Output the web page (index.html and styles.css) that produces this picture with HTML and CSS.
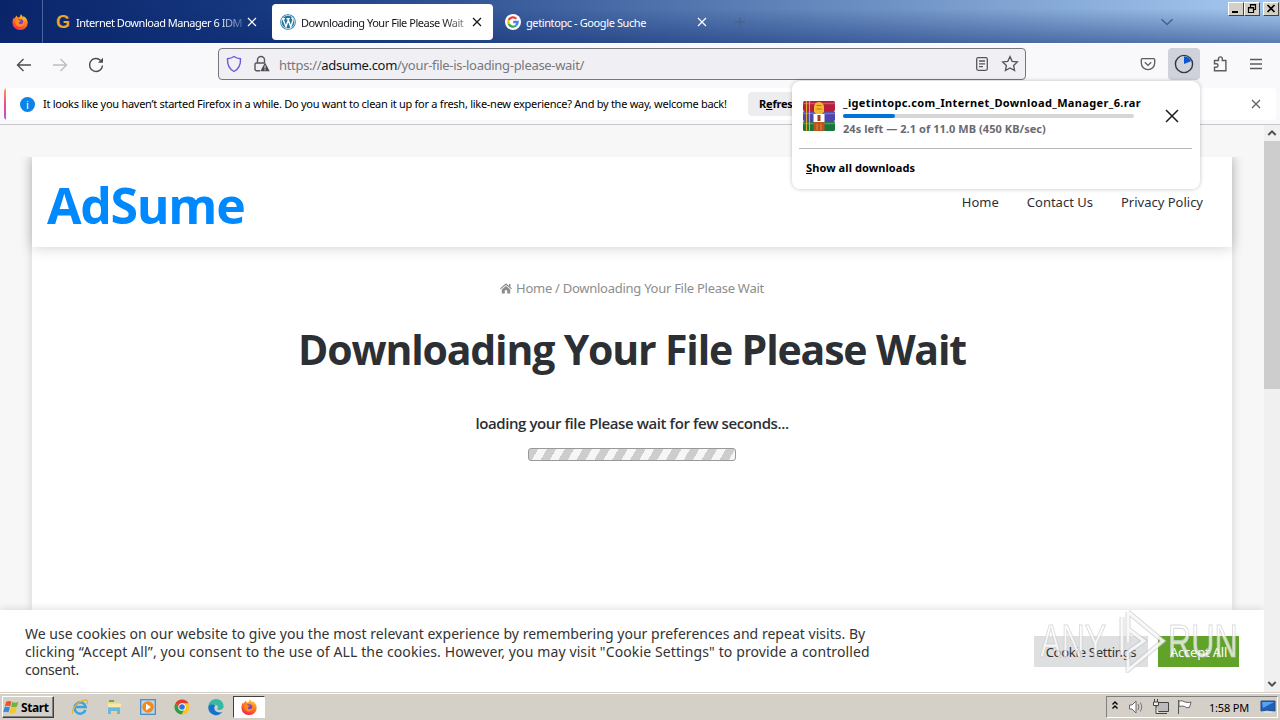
FILE: index.html
```html
<!DOCTYPE html>
<html lang="en">
<head>
<meta charset="utf-8">
<title>Downloading Your File Please Wait</title>
<link rel="stylesheet" href="styles.css">
</head>
<body>
<svg width="0" height="0" class="defs">
  <defs>
    <linearGradient id="fox" x1="0.8" y1="0" x2="0.3" y2="1"><stop offset="0" stop-color="#ffe02e"/><stop offset=".45" stop-color="#ff7a22"/><stop offset="1" stop-color="#f0274f"/></linearGradient>
    <symbol id="firefox" viewBox="0 0 16 16">
      <path d="M8.5 0.3c1.6 1 2.2 2.2 2.4 3.2.5-.3.6-1 .5-1.6 2.4 1.4 4.3 3.7 4.3 6.8a7.6 7.3 0 0 1-15.3 0c0-2.300.8-4.200 1.600-5.200.1.6.3.9.6 1.100C3.300 3 4.500 2 5 1.600c0 1 .3 1.600 1.200 2C7.800 3.600 8.700 2 8.500.3z" fill="url(#fox)"/>
      <circle cx="8" cy="8.600" r="3.400" fill="#7a3fd0"/>
      <path d="M3.600 5.500c1.500-.6 3 .1 3.600 1.100h1.700c-.4 1.100-1.500 1.200-2 1.800-.2 1.300 1.200 2.200 2.600 1.700 1.800-.5 2.300-2.300 1.300-4 2.600 2.300 1.300 6.400-2.600 6.600-4 .2-6.200-3.700-4.600-7.200z" fill="#ff8a1e"/>
    </symbol>
    <symbol id="google" viewBox="0 0 16 16">
      <circle cx="8" cy="8" r="8" fill="#fff"/>
      <g fill="none" stroke-width="2.300">
        <path d="M11.300 4.700A4.700 4.700 0 0 0 3.800 6" stroke="#ea4335"/>
        <path d="M3.800 6a4.700 4.700 0 0 0 0 4" stroke="#fbbc05"/>
        <path d="M3.800 10a4.700 4.700 0 0 0 7.300 1.500" stroke="#34a853"/>
        <path d="M8.200 8h4.400c0 1.500-.5 2.600-1.500 3.500" stroke="#4285f4"/>
      </g>
    </symbol>
    <symbol id="x" viewBox="0 0 12 12"><path d="M2 2l8 8M10 2l-8 8" fill="none" stroke="currentColor" stroke-width="1.200"/></symbol>
  </defs>
</svg>

<header class="tabs">
  <div class="pinned"><svg width="16" height="16"><use href="#firefox"/></svg></div>
  <div class="tab first">
    <b class="g-icon">G</b>
    <span class="tab-title t1">Internet Download Manager 6 IDM</span>
    <svg class="close" width="12" height="12"><use href="#x"/></svg>
  </div>
  <div class="tab active">
    <svg class="wp" width="16" height="16" viewBox="0 0 16 16"><circle cx="8" cy="8" r="7.800" fill="#21759b"/><circle cx="8" cy="8" r="6.700" fill="none" stroke="#fff" stroke-width=".7"/><path d="M2.700 4.500l3.300 8.300L8.300 6 10.700 12.800 12.900 6.400C13.400 5 12 4.600 11.700 3.300M1.900 4.800h3M6.500 4.800h3.200" fill="none" stroke="#fff" stroke-width="1.400"/></svg>
    <span class="tab-title t2">Downloading Your File Please Wait</span>
    <svg class="close" width="12" height="12"><use href="#x"/></svg>
  </div>
  <div class="tab third">
    <svg width="16" height="16"><use href="#google"/></svg>
    <span class="tab-title t3">getintopc - Google Suche</span>
    <svg class="close" width="12" height="12"><use href="#x"/></svg>
  </div>
  <svg class="plus" width="12" height="12" viewBox="0 0 12 12"><path d="M6 1v10M1 6h10" stroke="#48638f" stroke-width="1.300"/></svg>
  <svg class="chev" width="14" height="8" viewBox="0 0 14 8"><path d="M1.500 1.200L7 6.500l5.500-5.300" fill="none" stroke="#45638f" stroke-width="1.500"/></svg>
  <div class="winbtns">
    <i><svg width="14" height="12"><path d="M3 9h6" stroke="#000" stroke-width="2"/></svg></i>
    <i><svg width="14" height="12"><path d="M5.500 4V1.500h5v5H9M3.500 4.500h5v5h-5zM5 2h6M3 5h6" fill="none" stroke="#000" stroke-width="1.200"/></svg></i>
    <i class="last"><svg width="14" height="12"><path d="M3.500 2l7 7M10.500 2l-7 7" stroke="#000" stroke-width="1.700"/></svg></i>
  </div>
</header>

<nav class="toolbar">
  <svg class="nav-icons" width="100" height="20" viewBox="0 0 100 20" fill="none" stroke-width="1.400">
    <path d="M15 10H1.500M7.500 4L1.500 10l6 6" stroke="#4b4b52"/>
    <path d="M37 10h13.500M44.500 4l6 6-6 6" stroke="#bcbcc2"/>
    <path d="M86.500 10.500a6.500 6.500 0 1 1-1.900-5.100" stroke="#4b4b52"/><path d="M87 2.800v5h-5z" fill="#4b4b52"/>
  </svg>
  <div class="urlbar">
    <svg width="16" height="18" viewBox="0 0 16 18"><path d="M8 1.500c2 1.500 4 2 6.500 2.200C14.800 9 13.500 13.500 8 16.500 2.500 13.500 1.200 9 1.500 3.700 4 3.500 6 3 8 1.500z" fill="none" stroke="#6a5bd6" stroke-width="1.400"/></svg>
    <svg class="lock" width="18" height="18" viewBox="0 0 18 18"><path d="M4.500 8V5a3.500 3.500 0 0 1 7 0v3M7 15.800H3.500a1.500 1.500 0 0 1-1.500-1.500V9.500A1.500 1.500 0 0 1 3.500 8h8" fill="none" stroke="#55555c" stroke-width="1.400"/><path d="M12 7.500l4.700 8.800H7.300z" fill="#4b4b52"/><path d="M12 10.500v3M12 14.200v1.200" stroke="#f0f0f4"/></svg>
    <span class="url">https://<b>adsume.com</b>/your-file-is-loading-please-wait/</span>
    <svg class="url-end" width="46" height="18" viewBox="0 0 46 18" fill="none" stroke="#55555c" stroke-width="1.300"><rect x="2.700" y="2.700" width="10.600" height="12.600" rx="1.500"/><path d="M5 6h6M5 8.800h6M5 11.600h4"/><path d="M36 1.600l2.200 4.700 5.200.6-3.800 3.500 1 5.200L36 13l-4.600 2.600 1-5.200-3.800-3.500 5.200-.6z"/></svg>
  </div>
  <div class="tools">
    <svg width="16" height="16" viewBox="0 0 16 16" fill="none" stroke="#5b5b62" stroke-width="1.300"><path d="M2.500 2.700h11a1.200 1.200 0 0 1 1.200 1.200V7a6.700 6.700 0 0 1-13.400 0V3.900a1.200 1.200 0 0 1 1.200-1.200z"/><path d="M4.800 6.300L8 9.400l3.200-3.100"/></svg>
    <div class="dl"><svg width="20" height="20" viewBox="0 0 20 20"><circle cx="10" cy="10" r="8.600" fill="none" stroke="#30394a" stroke-width="1.400"/><path d="M10 10V2.500A7.500 7.500 0 0 1 17 7.300z" fill="#0a58d0"/></svg></div>
    <svg class="puzzle" width="18" height="18" viewBox="0 0 18 18" fill="none" stroke="#5b5b62" stroke-width="1.400"><path d="M2.500 15.800v-3.500h1.800a1.700 1.700 0 0 0 0-3.500H2.500V5.500h4V3.800a1.900 1.900 0 0 1 3.800 0v1.700h3.600v10.300z"/></svg>
    <svg width="14" height="14" viewBox="0 0 14 14" stroke="#5b5b62" stroke-width="1.300"><path d="M1 2.500h12M1 7h12M1 11.500h12"/></svg>
  </div>
</nav>

<div class="notice">
  <div class="notice-box">
    <span class="info">i</span>
    <span class="notice-text">It looks like you haven’t started Firefox in a while. Do you want to clean it up for a fresh, like-new experience? And by the way, welcome back!</span>
    <span class="refresh">R<u>e</u>fresh Firefox…</span>
    <svg class="notice-x" width="12" height="12"><use href="#x"/></svg>
  </div>
</div>

<div class="viewport">
  <main class="page">
    <div class="site">
      <div class="site-head">
        <span class="logo">AdSume</span>
        <div class="menu"><span>Home</span><span>Contact Us</span><span>Privacy Policy</span></div>
      </div>
      <div class="crumbs"><svg width="12" height="11" viewBox="0 0 12 11" fill="#8d8d8d"><path d="M6 .3L12 5.500l-.7.8L6 1.900.7 6.300 0 5.500zM9 1h1.500v3L9 2.800zM6 2.900l4.200 3.500V10.500H7.200V7.300H4.800v3.200H1.800V6.400z"/></svg><span>Home / Downloading Your File Please Wait</span></div>
      <h1>Downloading Your File Please Wait</h1>
      <p class="wait">loading your file Please wait for few seconds...</p>
      <div class="stripes"></div>
    </div>
    <div class="cookies">
      <div class="cookie-text"><div class="c1">We use cookies on our website to give you the most relevant experience by remembering your preferences and repeat visits. By</div><div class="c2">clicking “Accept All”, you consent to the use of ALL the cookies. However, you may visit "Cookie Settings" to provide a controlled</div><div class="c3">consent.</div></div>
      <span class="btn grey">Cookie Settings</span>
      <span class="btn green">Accept All</span>
    </div>
  </main>
  <div class="scroll">
    <svg width="16" height="16" viewBox="0 0 16 16"><path d="M4.300 10L8 6.300l3.700 3.700" fill="none" stroke="#505050" stroke-width="2"/></svg>
    <div class="thumb"></div>
    <svg class="down" width="16" height="16" viewBox="0 0 16 16"><path d="M4.300 6L8 9.700 11.700 6" fill="none" stroke="#505050" stroke-width="2"/></svg>
  </div>
</div>

<footer class="taskbar">
  <div class="start"><svg width="17" height="16" viewBox="0 0 16 15"><path d="M3 2.500c1.800-1 3.300-1 5 0L6.800 7C5.200 6.200 3.500 6.200 1.700 7z" fill="#e8562a"/><path d="M8.800 2.800c1.800 1 3.700 1 5.700-.2L13.200 7c-1.900 1.100-3.800 1.100-5.600.2z" fill="#6fb43f"/><path d="M1.500 7.800c1.800-.8 3.400-.8 5 0l-1.300 4.700c-1.600-.8-3.300-.8-5 0z" fill="#3b86d8"/><path d="M7.300 8.100c1.800.9 3.700.9 5.600-.1l-1.300 4.500c-1.900 1.200-3.800 1.200-5.600.2z" fill="#f6c528"/></svg><b>Start</b></div>
  <div class="quick">
    <svg width="18" height="18" viewBox="0 0 18 18"><path d="M14.500 11.800A5.600 5.600 0 1 1 14.700 9H5" fill="none" stroke="#3aa3e3" stroke-width="2.500"/><path d="M2 15.500C-.5 13 6 3.500 14 2c3-.5 3 2 1.800 4" fill="none" stroke="#e6b32c" stroke-width="1.300"/></svg>
    <svg width="18" height="18" viewBox="0 0 18 18"><path d="M2 3h5l1 1.500h7V15H2z" fill="#efd27b"/><path d="M3 5.500h13V9H3z" fill="#f8e9a8"/><path d="M4 2h5v2H4z" fill="#57ae6d"/><path d="M3 16V9.500h12V16h-3v-3H6v3z" fill="#67b9e4"/></svg>
    <svg width="18" height="18" viewBox="0 0 18 18"><rect x="1.700" y="1.700" width="14.600" height="14.600" fill="#b9d8ef" stroke="#4686bd" stroke-width="1.200"/><circle cx="9" cy="9" r="5.800" fill="#f18a1c"/><path d="M7 5.500l5 3.500-5 3.500z" fill="#fff"/></svg>
    <svg width="18" height="18" viewBox="0 0 18 18"><circle cx="9" cy="9" r="7.500" fill="#f7c62c"/><path d="M2.500 5.300A7.500 7.500 0 0 1 15.500 5.300H9L6 10.800z" fill="#e23c2e"/><path d="M2.500 5.200a7.500 7.500 0 0 0 6 11.300l3.500-6-6 .3z" fill="#2d9f4c"/><circle cx="9" cy="9" r="3.700" fill="#fff"/><circle cx="9" cy="9" r="2.800" fill="#2f73dc"/></svg>
    <svg width="18" height="18" viewBox="0 0 18 18"><path d="M1.300 9a7.700 7.700 0 0 1 15.400-.8c0 3.500-4.500 4.500-6.600 3 2.300-2.500-.5-5-3.300-4.300C4 7.500 2.300 9 1.300 9z" fill="#35b9a2"/><path d="M1.300 9a7.700 7.700 0 0 0 14 4.800c-2.800 1.200-7.300.7-8-3.200-.2-1.500.5-2.500 1.200-3.100C5 5.500 1.700 7 1.300 9z" fill="#1772cb"/></svg>
    <div class="task-active"><svg width="16" height="16"><use href="#firefox"/></svg></div>
  </div>
  <div class="tray">
    <svg width="86" height="18" viewBox="0 0 86 18" fill="none"><path d="M5.500 6.500l2.500-2.500 2.500 2.500M5.500 10.500L8 8l2.500 2.500" stroke="#000" stroke-width="1.400"/>
      <path d="M22.500 7h2.500l4-4v12l-4-4h-2.500z" fill="#fff" stroke="#666"/><path d="M31 6q1.700 3 0 6M33.500 4.500q2.700 4.500 0 9" stroke="#777"/>
      <path d="M49.500 4.500h12v9h-12z" fill="#bbb" stroke="#444"/><path d="M52 15.500h8" stroke="#444"/><path d="M47.500 1v3M50.500 1v3M46.500 4h5v3.500h-5zM49 7.500v8h3" stroke="#444" fill="#eee"/>
      <path d="M71.500 2v14" stroke="#555"/><path d="M72 3q3-1 6 1 3 1 6 0l-1.500 5.500q-3 1-5-1-2.500-1-5.500 0z" fill="#fff" stroke="#666"/></svg>
    <span class="clock">1:58 PM</span>
    <svg width="16" height="14" viewBox="0 0 16 14"><path d="M1 1h14v10l-8-1-6 1z" fill="#1c61bd" stroke="#254b84"/><path d="M2 2h12L3 8z" fill="#5ba4ec"/><path d="M4 12h8v1H4z" fill="#ddd"/></svg>
  </div>
</footer>

<aside class="downloads">
  <div class="item">
    <svg width="32" height="32" viewBox="0 0 32 32"><rect y="1" width="32" height="10" rx="1.500" fill="#b51f3c"/><rect y="11" width="32" height="10" rx="1.500" fill="#4c46ad"/><rect y="21" width="32" height="10" rx="1.500" fill="#19763a"/><path d="M0 3.500h32M0 13.500h32M0 23.500h32" stroke="#fff" stroke-opacity=".25" stroke-width="1.500"/><path d="M3.500 1v30M6.500 1v30" stroke="#e5a92e" stroke-width="1.100"/><rect x="10.500" y="21" width="11" height="10" fill="#ba5520"/><path d="M11 12V7a5 5 0 0 1 10 0v5l-5 4z" fill="#f4b72e"/><path d="M13.500 9h5M13.500 5.500h5" stroke="#b5741c" stroke-width="1.200"/><rect x="10.500" y="14" width="11" height="8" fill="#fff"/><rect x="14.500" y="15" width="3" height="6" fill="#a34020"/><path d="M14 24v6M18 24v6" stroke="#e78a35"/></svg>
    <div class="info-col">
      <b class="fname">_igetintopc.com_Internet_Download_Manager_6.rar</b>
      <div class="bar"><div class="fill"></div></div>
      <b class="status">24s left — 2.1 of 11.0 MB (450 KB/sec)</b>
    </div>
    <svg class="cancel" width="16" height="16" viewBox="0 0 16 16"><path d="M2 2l12 12M14 2L2 14" stroke="#1b1b20" stroke-width="1.500"/></svg>
  </div>
  <b class="all"><u>S</u>how all downloads</b>
</aside>

<div class="mark"><span>ANY</span><svg width="50" height="64" viewBox="0 0 50 64"><path d="M4 8v38M10 3v30M10 3l35 29-35 29V43l16-11L10 20" fill="none" stroke="#bbb" stroke-opacity=".55" stroke-width="5"/><path d="M4 8v38M10 3v30M10 3l35 29-35 29V43l16-11L10 20" fill="none" stroke="#fff" stroke-opacity=".8" stroke-width="3"/></svg><span>RUN</span></div>
</body>
</html>
```
FILE: styles.css
```css
* { box-sizing: border-box; }
body { margin: 0; width: 1280px; height: 720px; overflow: hidden; display: flex; flex-direction: column; position: relative; font-family: "Noto Sans", sans-serif; font-size: 11px; color: #000; }
svg { display: block; flex: none; }
.defs { position: absolute; }
span, b { white-space: nowrap; }

.tabs { height: 43px; flex: none; display: flex; align-items: center; color: #fff; background: linear-gradient(180deg, rgba(20,50,120,0) 20%, rgba(10,40,110,.48)), linear-gradient(90deg, #0a246a, #16387f 20%, #a6caf0 100%); }
.pinned { width: 43px; height: 43px; padding: 0 0 0 12px; display: flex; align-items: center; border-right: 1px solid #4c64a0; }
.tab { display: flex; align-items: center; height: 36px; border-radius: 4px; }
.tab-title { margin-left: 6px; padding-top: 2px; line-height: 16px; flex: none; }
.first { width: 229px; padding-left: 13px; }
.g-icon { width: 15px; font: bold 18px/18px "Liberation Sans", sans-serif; color: #e8a62c; }
.t1 { width: 166px; letter-spacing: -.47px; margin-left: 5px; -webkit-mask-image: linear-gradient(90deg, #000 140px, transparent 175px); }
.first .close { margin-left: 4px; }
.active { width: 221px; background: #fff; color: #15141a; padding-left: 8px; }
.t2 { width: 164px; margin-left: 5px; letter-spacing: -.47px; -webkit-mask-image: linear-gradient(90deg, #000 140px, transparent 185px); }
.active .close { margin-left: 6px; }
.third { width: 229px; padding-left: 12px; }
.t3 { width: 168px; margin-left: 5px; letter-spacing: -.4px; }
.third .close { margin-left: 2px; }
.plus { margin-left: 12px; }
.chev { margin-left: 414px; }
.winbtns { display: flex; align-self: flex-start; margin: 2px 0 0 54px; }
.winbtns i { width: 16px; height: 14px; background: #d4d0c8; border: 1px solid; border-color: #fff #404040 #404040 #fff; }
.winbtns .last { margin-left: 3px; }

.toolbar { height: 41px; flex: none; display: flex; align-items: center; background: #f9f9fb; border-top: 1px solid #fff; }
.nav-icons { margin: 1px 0 0 16px; }
.urlbar { margin-left: 102px; width: 808px; height: 32px; display: flex; align-items: center; border: 1px solid #76767d; border-radius: 4px; background: #f0f0f4; padding-left: 7px; }
.lock { margin-left: 11px; }
.url { margin-left: 8px; width: 695px; font-size: 13px; color: #77777d; letter-spacing: -.31px; padding-top: 1px; }
.url b { font-weight: 400; color: #15141a; }
.tools { display: flex; align-items: center; margin-left: 114px; }
.dl { width: 32px; height: 32px; margin-left: 12px; border-radius: 4px; background: #cfd2da; display: grid; place-items: center; }
.puzzle { margin: 0 19px 0 12px; }

.notice { height: 41px; flex: none; background: #f9f9fb; border-bottom: 1px solid #c8c8cc; padding: 4px 4px 0; }
.notice-box { height: 32px; background: linear-gradient(#ff9a56, #f0479a 50%, #a85ad8) left/2px 100% no-repeat #fff; border-radius: 4px; display: flex; align-items: center; }
.info { width: 15px; height: 15px; margin-left: 16px; border-radius: 50%; background: #0a84e8; color: #fff; text-align: center; line-height: 15px; }
.notice-text { width: 705px; margin-left: 8px; padding-bottom: 2px; letter-spacing: -.27px; }
.refresh { width: 110px; height: 24px; line-height: 24px; padding-left: 11px; background: #ededf0; border-radius: 4px; font-weight: 700; letter-spacing: -.2px; }
.notice-x { margin-left: 392px; color: #5b5b62; }

.viewport { height: 567px; flex: none; display: flex; }
.page { width: 1264px; height: 567px; background: #f7f7f7; padding: 32px 32px 0; overflow: hidden; }
.site { height: 453px; background: #fff; text-align: center; box-shadow: 0 0 9px rgba(0,0,0,.16); clip-path: inset(0 -12px 0 -12px); }
.site-head { height: 90px; display: flex; align-items: center; justify-content: space-between; padding: 5px 29px 0 15px; background: #fff; box-shadow: 0 0 14px rgba(0,0,0,.2); }
.logo { font: bold 50px/60px "Open Sans", sans-serif; color: #0088ff; letter-spacing: -1.3px; }
.menu { display: flex; gap: 28px; margin-bottom: 6px; font-size: 13px; color: #2c2f34; }
.crumbs { display: flex; justify-content: center; align-items: center; gap: 4px; height: 18px; margin-top: 32px; color: #8d8d8d; font-size: 13px; letter-spacing: -.27px; }
h1 { margin: 22px 0 0; font: bold 41px/60px "Open Sans", sans-serif; color: #2c2f34; letter-spacing: -1.17px; white-space: nowrap; }
.wait { margin: 33px 0 0; font: 600 15px/22px "Open Sans", sans-serif; color: #2c2f34; letter-spacing: -.4px; }
.stripes { width: 208px; height: 13px; margin: 14px auto 0; border: 1px solid #999; border-radius: 3px; background: repeating-linear-gradient(120deg, #cdcdcd 0 8px, #f6f6f6 8px 15.500px); }
.cookies { height: 82px; margin: 0 -32px; background: #fff; display: flex; align-items: center; padding: 0 25px 0 25px; position: relative; box-shadow: 0 -1px 8px rgba(0,0,0,.12); }
.cookie-text { width: 1009px; padding-top: 2px; font-size: 14px; line-height: 18px; color: #333; white-space: nowrap; }
.c1 { letter-spacing: .025px; }
.c2 { letter-spacing: .116px; }
.c3 { letter-spacing: -.25px; }
.btn { height: 31px; line-height: 33px; font-size: 13px; text-align: center; margin-top: 1px; }
.grey { width: 114px; background: #dedfe0; color: #333; letter-spacing: -.25px; }
.green { width: 81px; margin-left: 10px; background: #61a229; color: #fff; letter-spacing: -.2px; }
.scroll { width: 16px; background: #f0f0f0; display: flex; flex-direction: column; }
.thumb { height: 248px; background: #cdcdcd; }
.down { margin-top: auto; }

.taskbar { height: 28px; background: #d4d0c8; border-top: 1px solid #d4d0c8; box-shadow: inset 0 1px #fff; display: flex; align-items: center; padding: 1px 2px 0; }
.start { width: 52px; height: 22px; display: flex; align-items: center; border: 1px solid; border-color: #fff #404040 #404040 #fff; box-shadow: inset -1px -1px #808080; padding-left: 0; }
.start b { font-size: 12px; letter-spacing: -.4px; margin-left: 1px; }
.quick { display: flex; align-items: center; gap: 16px; margin-left: 17px; }
.task-active { width: 32px; height: 22px; margin-left: -8px; background: #fff; border: 1px solid; border-color: #404040 #fff #fff #404040; display: grid; place-items: center; }
.tray { margin-left: auto; width: 172px; height: 22px; display: flex; align-items: center; border: 1px solid; border-color: #808080 #fff #fff #808080; }
.clock { width: 51px; margin-left: 16px; letter-spacing: -.2px; }

.downloads { position: absolute; left: 792px; top: 81px; width: 408px; height: 108px; background: #fff; border-radius: 8px; box-shadow: 0 0 4px rgba(0,0,0,.24); padding: 0 8px 0 7px; }
.item { height: 68px; display: flex; align-items: center; border-bottom: 1px solid #b8b8bc; padding: 3px 0 0 4px; }
.info-col { width: 300px; margin-left: 8px; }
.fname, .status { display: block; line-height: 16px; }
.fname { letter-spacing: .36px; }
.bar { width: 291px; height: 4px; margin: 3px 0; border-radius: 2px; background: #d6d6d6; }
.fill { width: 52px; height: 4px; border-radius: 2px; background: #0073d8; }
.status { color: #6a6a70; letter-spacing: .06px; padding-bottom: 1px; }
.cancel { margin-left: 21px; }
.all { display: block; margin: 10px 0 0 7px; line-height: 18px; letter-spacing: .09px; }

.mark { position: absolute; left: 1040px; top: 609px; height: 64px; display: flex; align-items: center; color: rgba(255,255,255,.72); }
.mark span { width: 78px; font: 46px/64px "Liberation Sans Narrow", "Liberation Sans", sans-serif; transform: scaleX(.7); transform-origin: left; -webkit-text-stroke: 1.200px rgba(200,200,200,.65); }
```
